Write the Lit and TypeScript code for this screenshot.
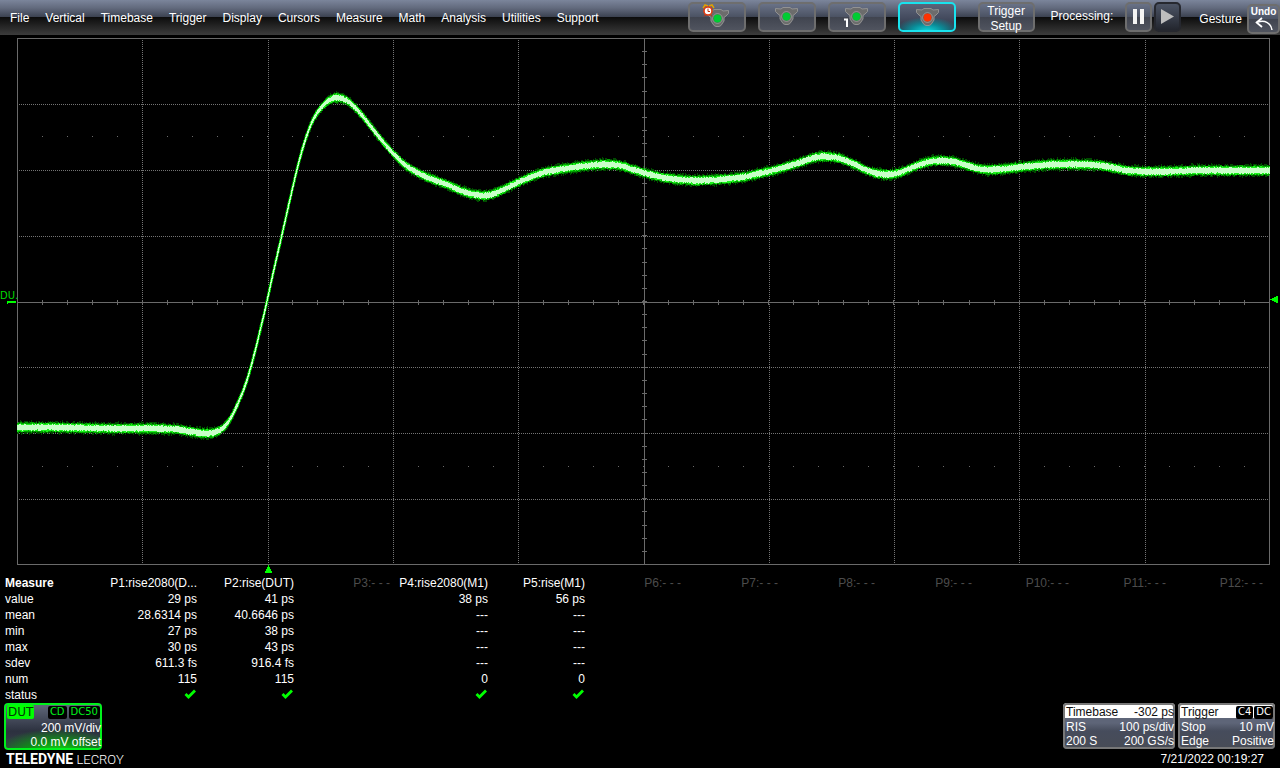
import { LitElement, html, svg, css } from "lit";
import { customElement } from "lit/decorators.js";
import { classMap } from "lit/directives/class-map.js";

const MENU = [
  "File", "Vertical", "Timebase", "Trigger", "Display", "Cursors",
  "Measure", "Math", "Analysis", "Utilities", "Support",
];

interface Parameter {
  name: string;
  values?: string[];
}

const ROWS = ["value", "mean", "min", "max", "sdev", "num"];

const PARAMETERS: Parameter[] = [
  { name: "P1:rise2080(D...", values: ["29 ps", "28.6314 ps", "27 ps", "30 ps", "611.3 fs", "115"] },
  { name: "P2:rise(DUT)", values: ["41 ps", "40.6646 ps", "38 ps", "43 ps", "916.4 fs", "115"] },
  { name: "P3:- - -" },
  { name: "P4:rise2080(M1)", values: ["38 ps", "---", "---", "---", "---", "0"] },
  { name: "P5:rise(M1)", values: ["56 ps", "---", "---", "---", "---", "0"] },
  { name: "P6:- - -" },
  { name: "P7:- - -" },
  { name: "P8:- - -" },
  { name: "P9:- - -" },
  { name: "P10:- - -" },
  { name: "P11:- - -" },
  { name: "P12:- - -" },
];

/* Step response of the device under test, in display coordinates. */
const SAMPLES: [number, number][] = [
  [-20, 427], [0, 427], [60, 427], [110, 428], [160, 428], [178, 429], [190, 431], [205, 433],
  [215, 432], [224, 427], [230, 419], [237, 405], [243, 391], [248, 377], [256, 347],
  [263, 318], [267, 301], [273, 273], [280, 243], [287, 212], [295, 177], [300, 157],
  [307, 134], [313, 119], [322, 106], [330, 99], [338, 97], [347, 100], [357, 109],
  [367, 121], [377, 134], [387, 146], [397, 157], [407, 166], [417, 172], [430, 178],
  [447, 184], [463, 191], [480, 195], [487, 195], [497, 192], [518, 182], [540, 173],
  [560, 169], [580, 166], [603, 164], [620, 165], [633, 169], [650, 174], [663, 177],
  [680, 179], [700, 180], [740, 177], [760, 173], [780, 168], [800, 162],
  [815, 157], [827, 156], [840, 158], [853, 163], [867, 170], [877, 173], [888, 174],
  [897, 173], [910, 168], [920, 164], [930, 161], [943, 160], [957, 162], [970, 166],
  [983, 169], [997, 169], [1017, 167], [1037, 165], [1060, 164], [1087, 164], [1107, 166],
  [1127, 170], [1147, 171], [1167, 171], [1193, 170], [1230, 170], [1270, 170], [1300, 170],
];

const LEFT = 17, RIGHT = 1269, TOP = 38, BOTTOM = 564, MID_X = 644, MID_Y = 302;
const GRID_X = [142, 268, 393, 518, 769, 894, 1019, 1145];
const GRID_Y = [104, 170, 236, 367, 433, 499];

function spline(x: number): number {
  let i = 1;
  while (i < SAMPLES.length - 3 && SAMPLES[i + 1][0] <= x) i++;
  const [p0, p1, p2, p3] = [SAMPLES[i - 1], SAMPLES[i], SAMPLES[i + 1], SAMPLES[i + 2]];
  const h = p2[0] - p1[0];
  const t = (x - p1[0]) / h;
  const m1 = ((p2[1] - p0[1]) / (p2[0] - p0[0])) * h;
  const m2 = ((p3[1] - p1[1]) / (p3[0] - p1[0])) * h;
  const t2 = t * t, t3 = t2 * t;
  return (2 * t3 - 3 * t2 + 1) * p1[1] + (t3 - 2 * t2 + t) * m1 +
    (-2 * t3 + 3 * t2) * p2[1] + (t3 - t2) * m2;
}

/* The spline averaged over a few columns, which rounds off its knots. */
function level(x: number): number {
  let sum = 0;
  for (let k = -4; k <= 4; k++) sum += spline(x + k);
  return sum / 9;
}

/* Persistence trace: one bar per pixel column in each intensity layer. */
function tracePaths(): string[] {
  let seed = 7321;
  const noise = () => {
    seed = (seed * 1103515245 + 12345) % 2147483648;
    return seed / 2147483648;
  };
  const layers = [
    { half: 4.4, slope: 1.5, jitter: 2.8 },
    { half: 4, slope: 1.2, jitter: 1.4 },
    { half: 3, slope: 0.9, jitter: 1.4 },
    { half: 2, slope: 0.45, jitter: 1.5 },
  ];
  const paths = layers.map(() => "");
  for (let x = LEFT; x <= RIGHT; x++) {
    const y = level(x + 0.5) + 0.5;
    const s = Math.abs(level(x + 1) - level(x));
    const calm = 1 / (1 + s * 0.4);
    layers.forEach((l, i) => {
      const reach = Math.hypot(l.half * (0.4 + 0.6 * calm), l.slope * s);
      const up = Math.round(y - reach - noise() * l.jitter * calm);
      const down = Math.round(y + reach + noise() * l.jitter * calm);
      paths[i] += `M${x} ${up}h1V${Math.max(down, up + 1)}h-1z`;
    });
  }
  return paths;
}

const TRACE = tracePaths();

function tickPath(): string {
  let d = "";
  for (let i = 1; i < 50; i++) {
    const x = Math.round(LEFT + (i * (RIGHT - LEFT)) / 50);
    d += `M${x} ${MID_Y - 2}h1v5h-1z`;
  }
  for (let i = 1; i < 40; i++) {
    const y = Math.round(TOP + (i * (BOTTOM - TOP)) / 40);
    d += `M${MID_X - 2} ${y}h5v1h-5z`;
  }
  for (let i = 1; i < 50; i++) {
    const x = Math.round(LEFT + (i * (RIGHT - LEFT)) / 50);
    d += `M${x} 136h1v1h-1zM${x} 466h1v1h-1z`;
  }
  return d;
}

const TICKS = tickPath();

@customElement("scope-grid")
class ScopeGrid extends LitElement {
  static styles = css`
    :host { display: block; }
    svg { display: block; width: 100%; height: auto; }
    .line { fill: none; stroke: #6a6a6a; shape-rendering: crispEdges; }
    .dots { stroke: #747474; stroke-dasharray: 1 1; }
    .ticks { fill: #6a6a6a; shape-rendering: crispEdges; }
    .trace { shape-rendering: crispEdges; }
    .l0 { fill: #004a00; }
    .l1 { fill: #00a000; }
    .l2 { fill: #1cf21c; }
    .l3 { fill: #c8ffc8; }
    .mark { fill: #00ff00; shape-rendering: crispEdges; }
    .name { fill: #00d800; font: 10px "DejaVu Sans", sans-serif; }
  `;

  render() {
    return html`
      <svg viewBox="0 35 1280 540" role="img" aria-label="DUT waveform">
        ${GRID_X.map((x) => svg`<path class="line dots" d="M${x + 0.5} 40V564"/>`)}
        ${GRID_Y.map((y) => svg`<path class="line dots" d="M19 ${y + 0.5}H1269"/>`)}
        <path class="line" d="M17.5 38.5H1269.5V564.5H17.5zM644.5 38V564M17 302.5H1269"/>
        <path class="ticks" d=${TICKS}/>
        <g class="trace">${TRACE.map((d, i) => svg`<path class="l${i}" d=${d}/>`)}</g>
        <path class="mark" d="M268 565h1v2h1v2h1v2h1v2h-7v-2h1v-2h1v-2h1z"/>
        <path class="mark" d="M7 301h9v2h-8v1h-1z"/>
        <path class="mark" d="M1270 299h2v-1h2v-1h2v-1h2v7h-2v-1h-2v-1h-2v-1h-2z"/>
        <text class="name" x="0" y="299">DU.</text>
      </svg>`;
  }
}

const lamp = (x: number, y: number, color: string) => svg`
  <g transform="translate(${x} ${y})">
    <path d="M.5 1.5L6 2 8 .5h7L17 2l5.500-.5v3L20 7l-2 1.500V12l-3 4.500-2 1H10l-2-1L5 12V8.500L3 7 .5 4.500z"
      fill="#6c6c6c" stroke="#929292"/>
    <circle cx="11.500" cy="9.500" r="4.800" fill="#5a5a5a" stroke="#a8a8a8" stroke-width=".8"/>
    <circle cx="11.500" cy="9.500" r="3.900" fill=${color}/>
  </g>`;

@customElement("app-root")
class AppRoot extends LitElement {
  static styles = css`
    :host {
      display: block;
      min-height: 100vh;
      background: #000;
      color: #fff;
      font: 12px/16px "Liberation Sans", Arial, sans-serif;
    }
    * { box-sizing: border-box; }
    button { margin: 0; padding: 0; color: inherit; font: inherit; }
    .bar {
      display: flex;
      align-items: flex-start;
      justify-content: space-between;
      height: 35px;
      background: linear-gradient(#7b859b 0, #626a7d 8px, #3b4150 17px, #0c0c0c 17px, #3c3c3c 35px);
    }
    .menu { display: flex; gap: 16px; padding: 10px 0 0 10px; }
    .menu button { border: 0; background: none; }
    .tools { display: flex; align-items: flex-start; padding-top: 2px; }
    .modes { display: flex; gap: 12px; margin-right: 22px; }
    .key {
      display: block;
      height: 30px;
      border: 2px solid #6e6e6e;
      border-radius: 5px;
      background: linear-gradient(#697287 0, #4b5263 50%, #40444f 50%, #50545f 100%);
    }
    .key svg { display: block; margin: auto; }
    .mode { width: 58px; }
    .mode.active {
      border-color: #19e3ee;
      background: radial-gradient(ellipse 60% 55% at 50% 105%, #10d8de, #0a8c98 50%, transparent),
        linear-gradient(#5c6479, #2f3547);
    }
    .setup { width: 57px; padding-bottom: 3px; line-height: 15px; margin-right: 16px; }
    .processing { display: flex; align-items: flex-start; margin-right: 18px; }
    .label { padding-top: 6px; margin-right: 12px; }
    .small { width: 27px; }
    .play { margin-left: 2px; border-color: #26282f; background: linear-gradient(#4c5465, #23262e); }
    .gesture { display: flex; align-items: flex-start; padding-top: 2px; }
    .gesture .label { margin-right: 5px; padding-top: 7px; }
    .undo { width: 33px; font: bold 10px/10px "Liberation Sans", Arial, sans-serif; }

    .measure {
      width: calc(100% - 16px);
      table-layout: fixed;
      border-collapse: collapse;
    }
    .measure th, .measure td {
      height: 16px;
      padding: 0;
      text-align: right;
      white-space: nowrap;
      font-weight: normal;
    }
    .measure th.head { width: 100px; padding-left: 5px; text-align: left; }
    .measure thead th.head { font-weight: bold; }
    .measure th.off { color: #4c4c4c; padding-right: 1px; }
    .check { display: inline-block; width: 12px; height: 10px; margin-right: 1px; vertical-align: top; margin-top: 2px; }

    .boxes { display: flex; align-items: flex-start; padding: 0 5px 0 4px; }
    .box {
      height: 46px;
      padding: 2px 1px 2px 3px;
      line-height: 14px;
      border-radius: 4px;
      box-shadow: inset 0 0 0 2px #777;
    }
    .line { display: flex; justify-content: space-between; height: 14px; }
    .line.end { justify-content: flex-end; }
    .line:first-child { margin-bottom: 1px; }
    .channel {
      width: 98px;
      height: 47px;
      box-shadow: inset 0 0 0 2px #00f21c;
      background: radial-gradient(ellipse 65% 50% at 55% 105%, #18e018, #108a18 50%, transparent),
        linear-gradient(#646b7e, #2c313f 60%, #3a3f4c);
    }
    .channel .line:first-child { margin-bottom: 2px; }
    .tag { padding: 0 1px; background: #00ff00; color: #003c00; font: 12px/14px "DejaVu Sans", sans-serif; border-radius: 2px; }
    .chips { display: flex; gap: 2px; padding: 1px 1px 0 0; }
    .chip {
      padding: 0 2px;
      background: #000;
      color: #00f21c;
      border-radius: 2px;
      font: 10px/12px "DejaVu Sans", sans-serif;
    }
    .info {
      background: linear-gradient(#fff 0, #fff 15px, #5e6578 15px, #5e6578 20px, #464c5c 28px, #484c56 100%);
    }
    .info .line:first-child { color: #101010; }
    .timebase { width: 112px; margin-left: auto; margin-right: 3px; }
    .trigger { width: 97px; }
    .trigger .chips { gap: 1px; }
    .trigger .chip { color: #fff; }

    .foot { display: flex; align-items: center; justify-content: space-between; padding: 0 16px 0 6px; height: 18px; }
    .brand { font: 300 13px/18px Roboto, sans-serif; }
    .brand strong { font-weight: 700; font-size: 14px; }
  `;

  render() {
    return html`
      <header class="bar">
        <nav class="menu">${MENU.map((m) => html`<button>${m}</button>`)}</nav>
        <div class="tools">
          <div class="modes">
            <button class="key mode" aria-label="Auto trigger">
              <svg width="54" height="26">
                ${lamp(16, 5, "#00cc33")}
                <path d="M13 4l2-3 3 1M24 4l-2-3-3 1" fill="none" stroke="#e0a000" stroke-width="1.500"/>
                <circle cx="18" cy="7" r="4" fill="#fff" stroke="#e23a10" stroke-width="1.600"/>
                <path d="M18 4.500V7.500h2M15 11l-1 1.500M21 11l1 1.500" fill="none" stroke="#c03010"/>
              </svg>
            </button>
            <button class="key mode" aria-label="Normal trigger">
              <svg width="54" height="26">${lamp(15, 3, "#00cc33")}</svg>
            </button>
            <button class="key mode" aria-label="Single trigger">
              <svg width="54" height="26">
                ${lamp(15, 3, "#00cc33")}
                <path d="M14 14.500h4V23h-2v-6.500h-2z" fill="#fff"/>
              </svg>
            </button>
            <button class="key mode active" aria-label="Stop trigger">
              <svg width="54" height="26">${lamp(16, 4, "#ff3300")}</svg>
            </button>
          </div>
          <button class="key setup">Trigger<br>Setup</button>
          <div class="processing">
            <span class="label">Processing:</span>
            <button class="key small" aria-label="Pause">
              <svg width="23" height="26"><path d="M6 5h4v15H6zM13 5h4v15h-4z" fill="#f4f4f4"/></svg>
            </button>
            <button class="key small play" aria-label="Run">
              <svg width="23" height="26"><path d="M5 5l13 7.500L5 20z" fill="#bdbdbd"/></svg>
            </button>
          </div>
          <div class="gesture">
            <span class="label">Gesture</span>
            <button class="key undo">Undo
              <svg width="24" height="14" viewBox="0 0 24 14">
                <path d="M6 5c7-2 13 1 14 8" fill="none" stroke="#fff" stroke-width="1.500"/>
                <path d="M4 6l6-5M4 5l6 5" fill="none" stroke="#fff" stroke-width="1.800"/>
              </svg>
            </button>
          </div>
        </div>
      </header>

      <scope-grid></scope-grid>

      <table class="measure">
        <thead>
          <tr>
            <th class="head" scope="col">Measure</th>
            ${PARAMETERS.map((p) => html`<th scope="col" class=${classMap({ off: !p.values })}>${p.name}</th>`)}
          </tr>
        </thead>
        <tbody>
          ${ROWS.map((row, i) => html`<tr>
            <th class="head" scope="row">${row}</th>
            ${PARAMETERS.map((p) => html`<td>${p.values ? p.values[i] : ""}</td>`)}
          </tr>`)}
          <tr>
            <th class="head" scope="row">status</th>
            ${PARAMETERS.map((p) => html`<td>${p.values
              ? html`<svg class="check" viewBox="0 0 12 10" role="img" aria-label="OK">
                  <path d="M1.500 5L4.500 8 11 1.500" fill="none" stroke="#00ff00" stroke-width="2.800"/></svg>`
              : ""}</td>`)}
          </tr>
        </tbody>
      </table>

      <section class="boxes">
        <div class="box channel">
          <div class="line">
            <span class="tag">DUT</span>
            <span class="chips"><span class="chip">CD</span><span class="chip">DC50</span></span>
          </div>
          <div class="line end">200 mV/div</div>
          <div class="line end">0.0 mV offset</div>
        </div>
        <div class="box info timebase">
          <div class="line"><span>Timebase</span><span>-302 ps</span></div>
          <div class="line"><span>RIS</span><span>100 ps/div</span></div>
          <div class="line"><span>200 S</span><span>200 GS/s</span></div>
        </div>
        <div class="box info trigger">
          <div class="line">
            <span>Trigger</span>
            <span class="chips"><span class="chip">C4</span><span class="chip">DC</span></span>
          </div>
          <div class="line"><span>Stop</span><span>10 mV</span></div>
          <div class="line"><span>Edge</span><span>Positive</span></div>
        </div>
      </section>

      <footer class="foot">
        <span class="brand"><strong>TELEDYNE</strong> LECROY</span>
        <time>7/21/2022 00:19:27</time>
      </footer>`;
  }
}
